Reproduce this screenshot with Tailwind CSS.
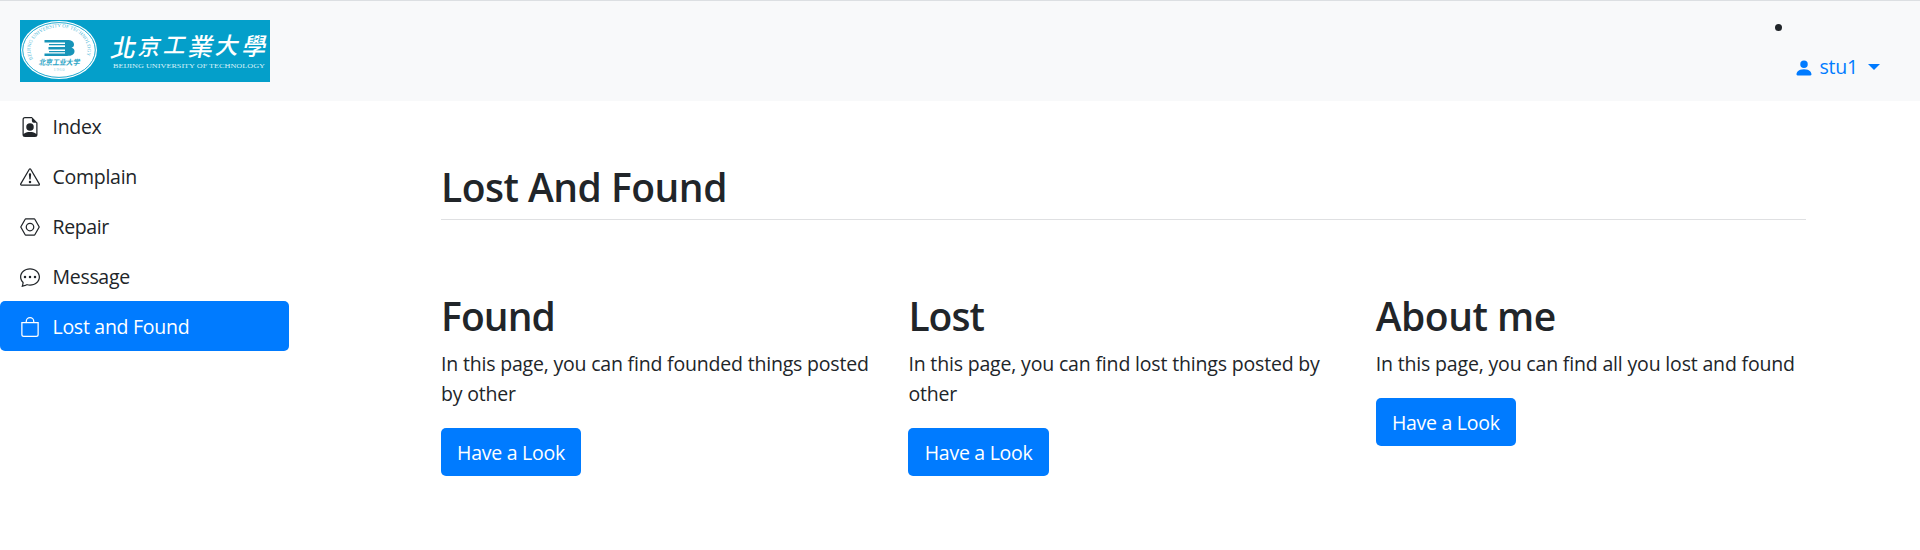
<!DOCTYPE html>
<html lang="en">
<head>
<meta charset="utf-8">
<title>Lost And Found</title>
<script src="https://cdn.jsdelivr.net/npm/@tailwindcss/browser@4"></script>
</head>
<body class="h-[550px] overflow-hidden bg-white font-['Open_Sans',sans-serif] text-[19.5px] leading-[30px] tracking-[-0.19px] text-[#212529]">
<header class="flex h-[101px] items-start justify-between border-t border-[#dcdfe2] bg-[#f8f9fa] pt-[19px] pl-5 pr-10">
  <svg class="h-[62px] w-[250px]" viewBox="0 0 250 62">
    <defs>
      <path id="ring" d="M13.600 40 A28.500 22.500 0 1 1 64.400 40"/>
    </defs>
    <rect width="250" height="62" fill="#049fca"/>
    <ellipse cx="39" cy="30" rx="38" ry="29" fill="#fff"/>
    <ellipse cx="39" cy="30" rx="36.300" ry="27.400" fill="none" stroke="#049fca" stroke-width=".9"/>
    <text font-family="Liberation Serif, serif" font-size="5" letter-spacing="0" fill="#4fb9d9"><textPath href="#ring" startOffset="1" textLength="96" lengthAdjust="spacingAndGlyphs">BEIJING UNIVERSITY OF TECHNOLOGY</textPath></text>
    <g fill="#1794b8">
      <path d="M24.500 20H47C52 20 54 22 54 24.500C54 26.300 53 27.300 51.500 27.800C53.500 28.300 54.500 29.700 54.500 31.300C54.500 34.300 52 36 47 36H24.500V33.500H45V29.500H28.500V27H45V22.500H24.500Z"/>
      <path d="M29 24H45V25.200H29ZM29 31H45V32.200H29Z"/>
    </g>
    <text transform="translate(18.500 44.500) skewX(-12)" font-family="Noto Sans CJK SC, sans-serif" font-size="7.500" font-weight="700" fill="#2ba4c5" letter-spacing="0" textLength="41" lengthAdjust="spacingAndGlyphs">北京工业大学</text>
    <text x="33.500" y="51" font-family="Liberation Serif, serif" font-size="4.500" letter-spacing="0" fill="#8fd0e4" textLength="11">1960</text>
    <text transform="translate(91 36) skewX(-12)" font-family="Noto Sans CJK TC, sans-serif" font-weight="500" letter-spacing="0" fill="#fff"><tspan x="-1" y="1" font-size="25">北</tspan><tspan x="26" y="-1.500" font-size="22">京</tspan><tspan x="51" y="-3" font-size="22">工</tspan><tspan x="76" y="0" font-size="25">業</tspan><tspan x="103" y="-2" font-size="23">大</tspan><tspan x="130" y="-1" font-size="24">學</tspan></text>
    <text x="93" y="48" font-family="Liberation Serif, serif" font-size="6.200" letter-spacing="0" fill="#d9f1f8" textLength="152" lengthAdjust="spacingAndGlyphs">BEIJING UNIVERSITY OF TECHNOLOGY</text>
  </svg>
  <div class="flex w-[105px] flex-col">
    <span class="mt-1 size-[7px] rounded-full bg-[#212529]"></span>
    <a href="#" class="mt-[21px] flex h-[30px] items-center pl-[19px] tracking-[-0.2px] text-[#007bff]">
      <svg class="mt-[1px] size-5 shrink-0" viewBox="0 0 16 16" fill="currentColor"><path d="M3 14s-1 0-1-1 1-4 6-4 6 3 6 4-1 1-1 1H3zm5-6a3 3 0 1 0 0-6 3 3 0 0 0 0 6z"/></svg>
      <span class="ml-[5.5px] w-[42px]">stu1</span>
      <svg class="ml-[7px] h-[6px] w-3 shrink-0" viewBox="0 0 12 6" fill="currentColor"><path d="M0 0H12L6 6Z"/></svg>
    </a>
  </div>
</header>
<div class="flex">
  <nav class="flex w-[289px] flex-col">
    <a href="#" class="flex h-[50px] items-center gap-[12.5px] px-5">
      <svg class="mt-[2px] size-5" viewBox="0 0 16 16" fill="currentColor"><path d="M11 8a3 3 0 1 1-6 0 3 3 0 0 1 6 0z"/><path d="M14 14V4.500L9.500 0H4a2 2 0 0 0-2 2v12a2 2 0 0 0 2 2h8a2 2 0 0 0 2-2zM9.500 3A1.500 1.500 0 0 0 11 4.500h2v9.255S12 12 8 12s-5 1.755-5 1.755V2a1 1 0 0 1 1-1h5.500v2z"/></svg>
      <span class="pt-0.5 tracking-[-0.3px]">Index</span>
    </a>
    <a href="#" class="flex h-[50px] items-center gap-[12.5px] px-5">
      <svg class="mt-[2px] size-5" viewBox="0 0 16 16" fill="currentColor"><path d="M7.938 2.016A.13.13 0 0 1 8.002 2a.13.13 0 0 1 .063.016.146.146 0 0 1 .054.057l6.857 11.667c.036.06.035.124.002.183a.163.163 0 0 1-.054.06.116.116 0 0 1-.066.017H1.146a.115.115 0 0 1-.066-.017.163.163 0 0 1-.054-.06.176.176 0 0 1 .002-.183L7.884 2.073a.147.147 0 0 1 .054-.057zm1.044-.45a1.130 1.130 0 0 0-1.960 0L.165 13.233c-.457.778.091 1.767.98 1.767h13.713c.889 0 1.438-.99.98-1.767L8.982 1.566z"/><path d="M7.002 12a1 1 0 1 1 2 0 1 1 0 0 1-2 0zM7.100 5.995a.905.905 0 1 1 1.800 0l-.35 3.507a.552.552 0 0 1-1.100 0L7.100 5.995z"/></svg>
      <span class="pt-0.5 tracking-[-0.27px]">Complain</span>
    </a>
    <a href="#" class="flex h-[50px] items-center gap-[12.5px] px-5">
      <svg class="mt-[2px] size-5" viewBox="0 0 16 16" fill="none" stroke="currentColor"><path d="M4.580 1.500h6.840a.5.5 0 0 1 .434.252l3.428 6a.5.5 0 0 1 0 .496l-3.428 6a.5.5 0 0 1-.434.252H4.580a.5.5 0 0 1-.434-.252l-3.428-6a.5.5 0 0 1 0-.496l3.428-6A.5.5 0 0 1 4.580 1.500z"/><circle cx="8" cy="8" r="3"/></svg>
      <span class="pt-0.5 tracking-[-0.4px]">Repair</span>
    </a>
    <a href="#" class="flex h-[50px] items-center gap-[12.5px] px-5">
      <svg class="mt-[2px] size-5" viewBox="0 0 16 16" fill="currentColor"><path d="M5 8a1 1 0 1 1-2 0 1 1 0 0 1 2 0zm4 0a1 1 0 1 1-2 0 1 1 0 0 1 2 0zm3 1a1 1 0 1 0 0-2 1 1 0 0 0 0 2z"/><path d="M2.165 15.803l.02-.004c1.830-.363 2.948-.842 3.468-1.105A9.060 9.060 0 0 0 8 15c4.418 0 8-3.134 8-7s-3.582-7-8-7-8 3.134-8 7c0 1.760.743 3.370 1.970 4.600a10.437 10.437 0 0 1-.524 2.318l-.003.011a10.722 10.722 0 0 1-.244.637c-.079.186.074.394.273.362a21.673 21.673 0 0 0 .693-.125zm.8-3.108a1 1 0 0 0-.287-.801C1.618 10.830 1 9.468 1 8c0-3.192 3.004-6 7-6s7 2.808 7 6c0 3.193-3.004 6-7 6a8.060 8.060 0 0 1-2.088-.272 1 1 0 0 0-.711.074c-.387.196-1.240.570-2.634.893a10.970 10.970 0 0 0 .398-2z"/></svg>
      <span class="pt-0.5 tracking-[-0.3px]">Message</span>
    </a>
    <a href="#" class="flex h-[50px] items-center gap-[12.5px] rounded-[5px] bg-[#007bff] px-5 text-white">
      <svg class="mt-[2px] size-5" viewBox="0 0 16 16" fill="currentColor"><path d="M8 1a2.500 2.500 0 0 1 2.500 2.500V4h-5v-.5A2.500 2.500 0 0 1 8 1zm3.500 3v-.5a3.500 3.500 0 1 0-7 0V4H1v10a2 2 0 0 0 2 2h10a2 2 0 0 0 2-2V4h-3.500zM2 5h12v9a1 1 0 0 1-1 1H3a1 1 0 0 1-1-1V5z"/></svg>
      <span class="pt-0.5 tracking-[-0.27px]">Lost and Found</span>
    </a>
  </nav>
  <main class="ml-[152px] w-[1365px] pt-[61px]">
    <h1 class="h-[58px] border-b border-[#dfe0e2] pt-px text-[39px] font-semibold leading-[48px] tracking-[-0.5px]">Lost And Found</h1>
    <div class="mt-[71px] grid grid-cols-[437px_437px_437px] gap-x-[30.4px]">
      <section>
        <h2 class="mb-[9px] pt-px text-[39px] font-semibold leading-[48px] tracking-[-0.9px]">Found</h2>
        <p>In this page, you can find founded things posted<br>by other</p>
        <a href="#" class="mt-[19px] flex h-12 w-[140px] items-center justify-center rounded-[5px] bg-[#007bff] tracking-[-0.27px] text-white"><span class="pt-0.5">Have a Look</span></a>
      </section>
      <section>
        <h2 class="mb-[9px] pt-px text-[39px] font-semibold leading-[48px] tracking-[-1px]">Lost</h2>
        <p class="tracking-[-0.17px]">In this page, you can find lost things posted by<br>other</p>
        <a href="#" class="mt-[19px] flex h-12 w-[140.5px] items-center justify-center rounded-[5px] bg-[#007bff] tracking-[-0.27px] text-white"><span class="pt-0.5">Have a Look</span></a>
      </section>
      <section>
        <h2 class="mb-[9px] pt-px text-[39px] font-semibold leading-[48px] tracking-[-0.5px]">About me</h2>
        <p class="tracking-[-0.17px]">In this page, you can find all you lost and found</p>
        <a href="#" class="mt-[19px] flex h-12 w-[140px] items-center justify-center rounded-[5px] bg-[#007bff] tracking-[-0.27px] text-white"><span class="pt-0.5">Have a Look</span></a>
      </section>
    </div>
  </main>
</div>
</body>
</html>
